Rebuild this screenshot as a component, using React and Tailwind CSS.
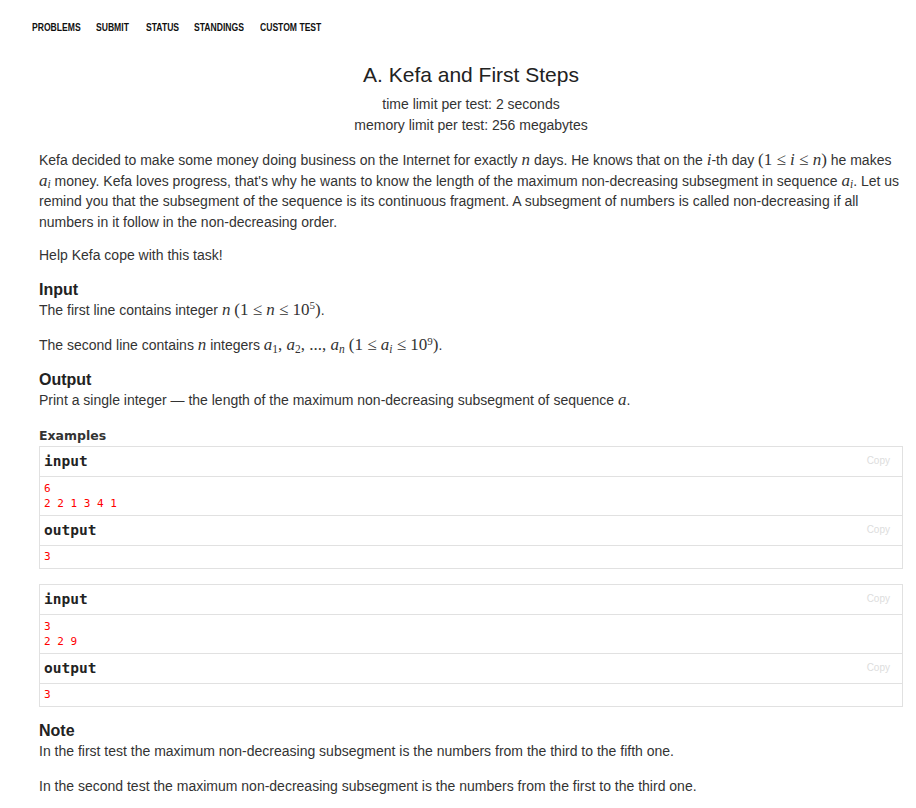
import React from "react";

const M = ({ children }) => (
  <span className="font-['Liberation_Serif',serif] text-[17px] leading-none italic">{children}</span>
);
const R = ({ children }) => (
  <span className="font-['Liberation_Serif',serif] text-[17px] leading-none not-italic">{children}</span>
);
const Sub = ({ children }) => (
  <sub className="text-[11.5px] leading-none not-italic">{children}</sub>
);
const SubI = ({ children }) => (
  <sub className="text-[11.5px] leading-none">{children}</sub>
);
const Sup = ({ children }) => (
  <sup className="text-[11px] leading-none">{children}</sup>
);

function Example({ input, output }) {
  return (
    <div className="border border-[#e1e1e1]">
      <div className="h-[30px] flex items-center justify-between px-[4px] border-b border-[#e1e1e1]">
        <span className="font-['DejaVu_Sans_Mono',monospace] font-bold text-[14.5px] text-[#222]">input</span>
        <span className="text-[10px] text-[#ddd] pr-[8px]">Copy</span>
      </div>
      <div className="px-[4px] py-[4px] border-b border-[#e1e1e1] font-['DejaVu_Sans_Mono',monospace] text-[11px] leading-[15px] text-[#f00]">
        {input.map((l, i) => (
          <div key={i} className="whitespace-pre">{l}</div>
        ))}
      </div>
      <div className="h-[30px] flex items-center justify-between px-[4px] border-b border-[#e1e1e1]">
        <span className="font-['DejaVu_Sans_Mono',monospace] font-bold text-[14.5px] text-[#222]">output</span>
        <span className="text-[10px] text-[#ddd] pr-[8px]">Copy</span>
      </div>
      <div className="px-[4px] pt-[3px] pb-[4px] font-['DejaVu_Sans_Mono',monospace] text-[11px] leading-[15px] text-[#f00]">
        {output.map((l, i) => (
          <div key={i} className="whitespace-pre">{l}</div>
        ))}
      </div>
    </div>
  );
}

export default function App() {
  return (
    <div className="w-[916px] min-h-[808px] bg-white font-['Liberation_Sans',Arial,sans-serif] text-[#333]">
      <div className="flex pl-[32px] pt-[19px] h-[38px] text-[11px] font-bold text-[#111] font-['Liberation_Sans',sans-serif]">
        <span className="w-[64px] shrink-0 whitespace-nowrap"><span className="inline-block origin-left scale-x-[0.78]">PROBLEMS</span></span>
        <span className="w-[50px] shrink-0 whitespace-nowrap"><span className="inline-block origin-left scale-x-[0.78]">SUBMIT</span></span>
        <span className="w-[48px] shrink-0 whitespace-nowrap"><span className="inline-block origin-left scale-x-[0.78]">STATUS</span></span>
        <span className="w-[66px] shrink-0 whitespace-nowrap"><span className="inline-block origin-left scale-x-[0.78]">STANDINGS</span></span>
        <span className="shrink-0 whitespace-nowrap"><span className="inline-block origin-left scale-x-[0.78]">CUSTOM TEST</span></span>
      </div>
      <div className="ml-[39px] w-[864px]">
        <div className="text-center mt-[24px]">
          <div className="text-[21px] leading-[26px] text-[#222]">A. Kefa and First Steps</div>
          <div className="mt-[6px] text-[14px] leading-[21px]">time limit per test: 2 seconds</div>
          <div className="text-[14px] leading-[21px]">memory limit per test: 256 megabytes</div>
        </div>
        <div className="mt-[14px] text-[14px] leading-[20.5px]">
          <p>
            Kefa decided to make some money doing business on the Internet for exactly <M>n</M> days. He knows that on the <M>i</M>-th day <R>(1 ≤ </R><M>i</M><R> ≤ </R><M>n</M><R>)</R> he makes <M>a<SubI>i</SubI></M> money. Kefa loves progress, that's why he wants to know the length of the maximum non-decreasing subsegment in sequence <M>a<SubI>i</SubI></M>. Let us remind you that the subsegment of the sequence is its continuous fragment. A subsegment of numbers is called non-decreasing if all numbers in it follow in the non-decreasing order.
          </p>
          <p className="mt-[13px]">Help Kefa cope with this task!</p>

          <div className="mt-[14px] text-[16px] font-bold leading-[20px] text-[#222]">Input</div>
          <p>
            The first line contains integer <M>n</M> <R>(1 ≤ </R><M>n</M><R> ≤ 10<Sup>5</Sup>)</R>.
          </p>
          <p className="mt-[15px]">
            The second line contains <M>n</M> integers <M>a</M><R><Sub>1</Sub>, </R><M>a</M><R><Sub>2</Sub>, ..., </R><M>a<SubI>n</SubI></M> <R>(1 ≤ </R><M>a<SubI>i</SubI></M><R> ≤ 10<Sup>9</Sup>)</R>.
          </p>

          <div className="mt-[14px] text-[16px] font-bold leading-[20px] text-[#222]">Output</div>
          <p>
            Print a single integer — the length of the maximum non-decreasing subsegment of sequence <M>a</M>.
          </p>

          <div className="mt-[16px] text-[12.5px] font-bold leading-[20px] text-[#333] font-['DejaVu_Sans',sans-serif]">Examples</div>
          <div className="flex flex-col gap-[15px]">
            <Example input={["6", "2 2 1 3 4 1"]} output={["3"]} />
            <Example input={["3", "2 2 9"]} output={["3"]} />
          </div>

          <div className="mt-[14px] text-[16px] font-bold leading-[20px] text-[#222]">Note</div>
          <p>In the first test the maximum non-decreasing subsegment is the numbers from the third to the fifth one.</p>
          <p className="mt-[14px]">In the second test the maximum non-decreasing subsegment is the numbers from the first to the third one.</p>
        </div>
      </div>
    </div>
  );
}
